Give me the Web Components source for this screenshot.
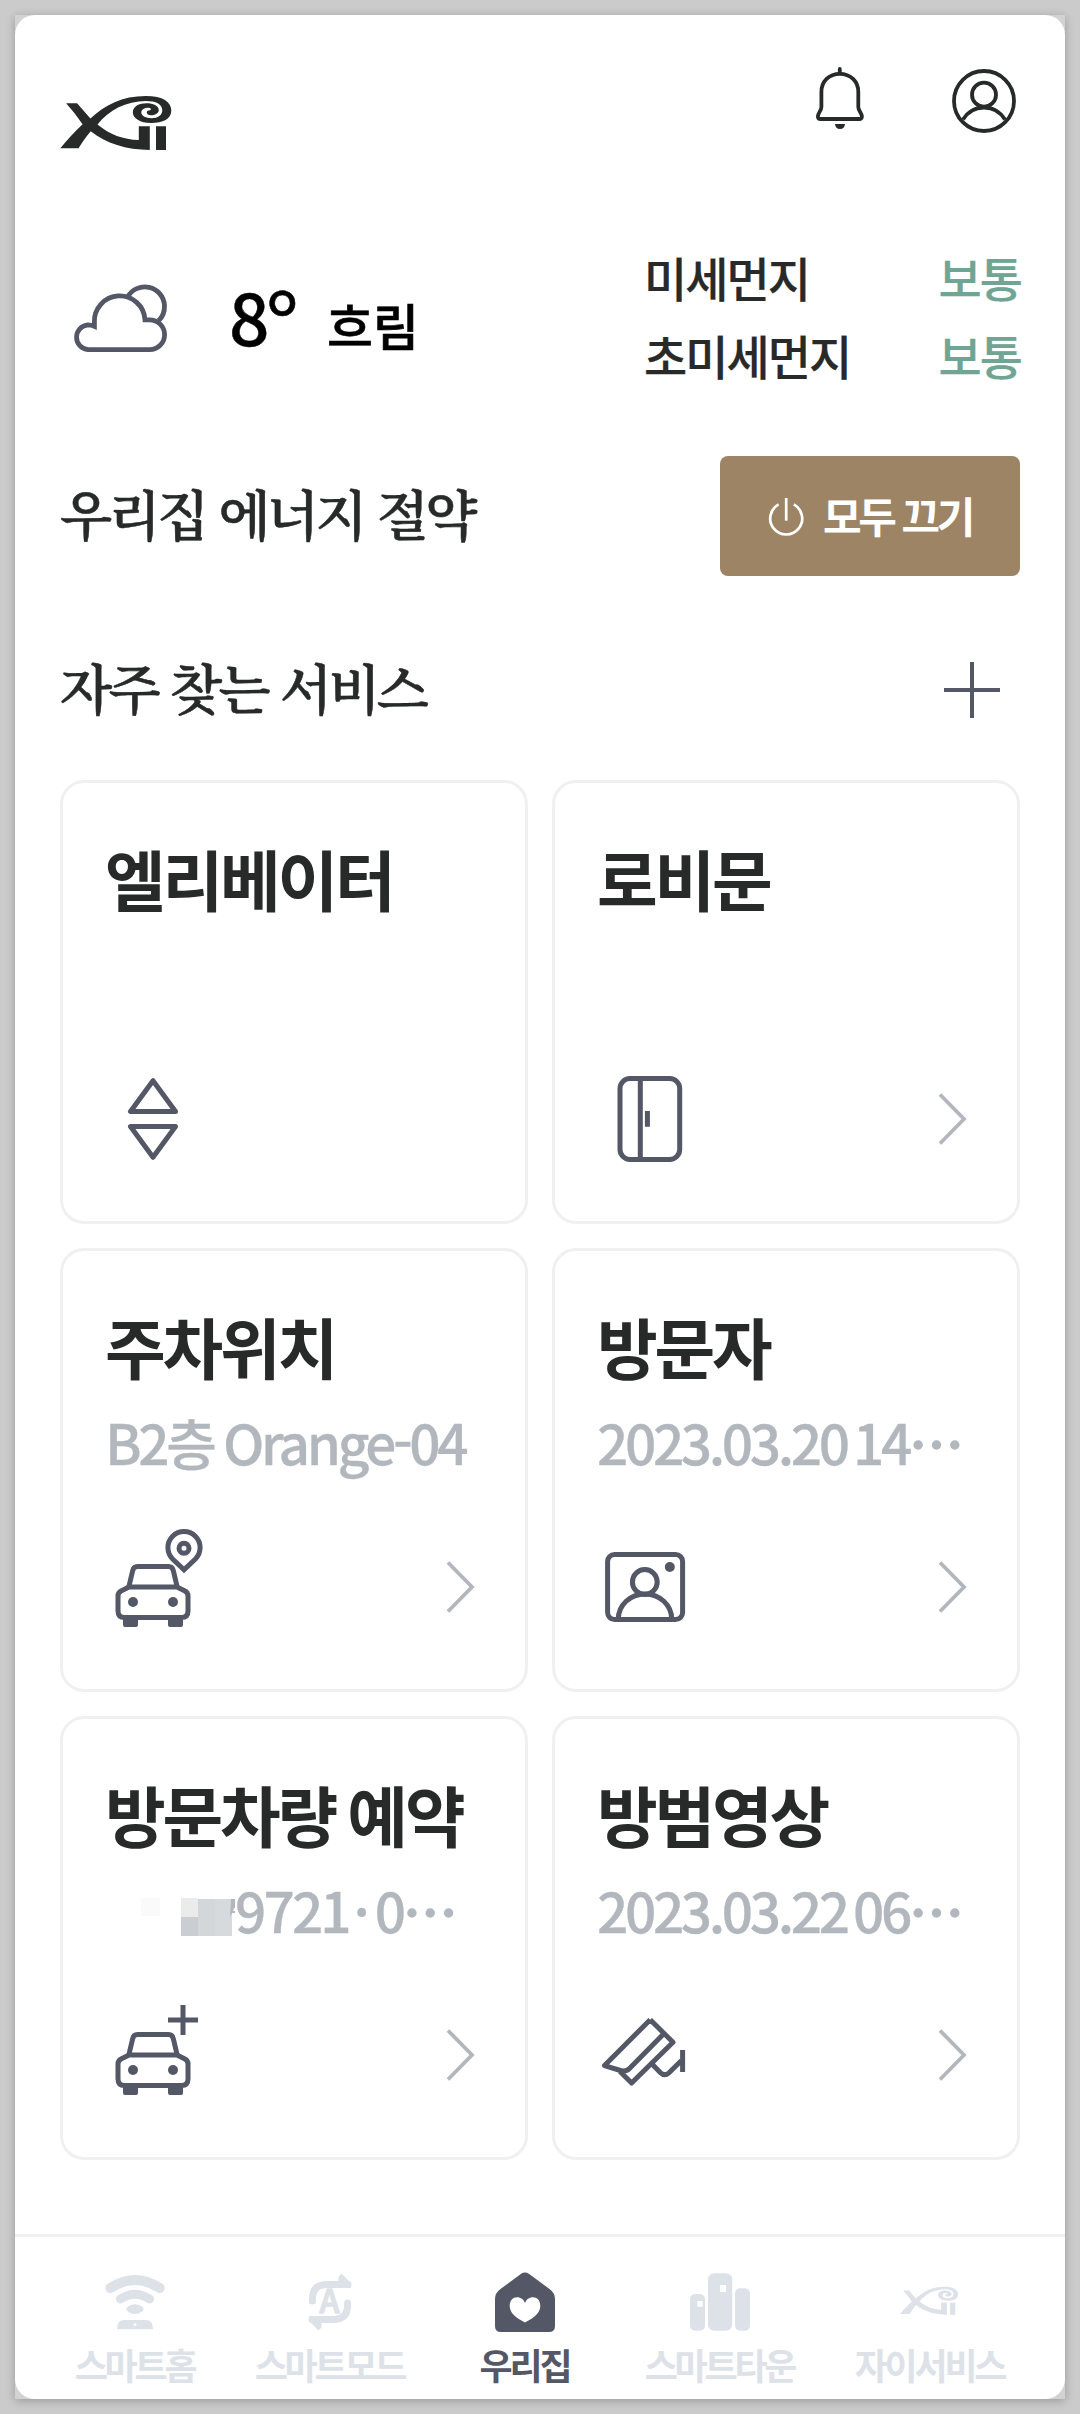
<!DOCTYPE html>
<html lang="ko">
<head>
<meta charset="utf-8">
<title>우리집</title>
<style>
  html, body { margin: 0; padding: 0; }
  body {
    background: #cbcbcb; padding: 15px; width: 1050px; height: 2384px;
    font-family: "Noto Sans CJK KR", sans-serif; color: #282a2a;
  }
</style>
</head>
<body>
<app-shell>
  <app-header></app-header>
  <weather-bar temp="8" state="흐림">
    <dust-row label="미세먼지" level="보통"></dust-row>
    <dust-row label="초미세먼지" level="보통"></dust-row>
  </weather-bar>
  <section-row heading="우리집 에너지 절약"><power-button>모두 끄기</power-button></section-row>
  <section-row class="services" heading="자주 찾는 서비스"><ui-icon name="plus" w="60" h="60" style="margin-right:18px"></ui-icon></section-row>
  <card-grid>
    <service-card heading="엘리베이터" icon="elevator"></service-card>
    <service-card heading="로비문" icon="door" link></service-card>
    <service-card heading="주차위치" icon="carpin" link>B2층 Orange-04</service-card>
    <service-card heading="방문자" icon="portrait" link>2023.03.20 14<dot-run></dot-run></service-card>
    <service-card heading="방문차량 예약" icon="carplus" link><plate-mask></plate-mask><span style="letter-spacing:-2.9px">9721</span><span style="display:inline-block;width:26px;text-align:center;letter-spacing:0">·</span>0<dot-run></dot-run></service-card>
    <service-card heading="방범영상" icon="cctv" link>2023.03.22 06<dot-run></dot-run></service-card>
  </card-grid>
  <nav-bar slot="nav">
    <nav-item icon="wifi">스마트홈</nav-item>
    <nav-item icon="mode">스마트모드</nav-item>
    <nav-item icon="house" active>우리집</nav-item>
    <nav-item icon="town">스마트타운</nav-item>
    <nav-item icon="xi">자이서비스</nav-item>
  </nav-bar>
</app-shell>
<script>
const CAR = `<g fill="none" stroke="currentColor" stroke-width="5"><path d="M29.8 54 L33.6 38 Q34.6 33.6 38.5 33.6 H69.5 Q73.4 33.6 74.4 38 L78.2 54"/><path d="M30 54 H78 L85.5 57.8 Q89 59.5 89 63 V78 Q89 84.5 82.5 84.5 H25.5 Q19 84.5 19 78 V63 Q19 59.5 22.5 57.8 Z"/></g>
<g fill="currentColor"><circle cx="34" cy="69" r="5"/><circle cx="74" cy="69" r="5"/><path d="M24 85h15v7q0 2-2 2h-11q-2 0-2-2zM69 85h15v7q0 2-2 2h-11q-2 0-2-2z"/></g>`;
const XI = `<g fill="currentColor"><path d="M6.1 7.3H17.1L30.4 22.6C45 9 62 0 86 0V5C66 5.2 49 14 37.5 28.4C50 38.500 63 43.500 78.800 44V30.300H89.800V54C66 53.500 46 47.500 30.700 35.200C26 41 22 46.500 18.600 52.300H0.300C7 44 14 36.500 22.600 28.300Q15 17 6.100 7.300Z"/><path d="M85.800 0C103 0 111.300 6 111.300 14.500C111.300 23 103 27 91 27C80 27 72.800 22 72.800 16.500C72.800 10.500 79 7.300 86.500 7.300C93 7.300 98.800 10 98.800 14C98.800 17.500 94.500 19.300 91 19.300C88.500 19.300 86.800 18 86.800 16.500C86.800 15 88 14.500 90 14.300C91.500 13.800 91 11.800 88.500 11.800C84.500 11.800 81.300 13.500 81.300 16.500C81.300 20 86 22.200 91.500 22.200C98 22.200 102.300 19 102.300 14.500C102.300 8 96 5 85.800 5Z"/><path d="M96 30.300h10V54H96z"/></g>`;
const ICONS = {
  logo: XI,
  bell: `<g fill="none" stroke="currentColor" stroke-width="3.8"><path d="M29.8 5V9" stroke-linecap="round"/><path d="M29.800 9.800C19 9.800 11.400 17.500 11.400 28V43C11.400 46.500 8.200 48.500 7.900 52.300Q7.800 55 10.500 55H49.300Q52 55 51.900 52.300C51.500 48.500 48.300 46.500 48.300 43V28C48.300 17.500 40.600 9.800 29.800 9.800Z"/></g><path d="M25 60H35Q34.500 65 30 65T25 60Z" fill="currentColor"/>`,
  user: `<g fill="none" stroke="currentColor" stroke-width="3.8"><circle cx="34" cy="34" r="30"/><circle cx="34" cy="27.700" r="12"/><path d="M13 52.500A24.400 24.400 0 0 1 55 52.500"/></g>`,
  cloud: `<g fill="none" stroke="currentColor" stroke-width="4.800"><path d="M18 69.600A12.600 12.400 0 0 1 18 44.900Q21.500 44.900 24.400 46.300V42.500A25.300 25.200 0 0 1 75 39.800H79.600A15 14.900 0 0 1 79.600 69.600Z"/><path d="M57.500 17.200A19.700 19.700 0 0 1 94.500 25.500Q94.800 35 88.500 40.800"/></g>`,
  plus: `<path d="M30 2V58M2 30H58" stroke="currentColor" stroke-width="4"/>`,
  power: `<g fill="none" stroke="currentColor" stroke-width="2.700"><path d="M13.600 9.400A16 16 0 1 0 28.800 9.400"/><path d="M21.200 3V25.700"/></g>`,
  elevator: `<g fill="none" stroke="currentColor" stroke-width="5" stroke-linejoin="round"><path d="M54 15.700L31.500 46.500H76.500Z"/><path d="M54 92.300L31.500 61.500H76.500Z"/></g>`,
  door: `<g fill="none" stroke="currentColor" stroke-width="5"><rect x="29" y="13.500" width="59.700" height="81" rx="10"/><path d="M49.300 13V95M56.400 46V61.700"/></g>`,
  carpin: CAR + `<g fill="none" stroke="currentColor" stroke-width="5"><path d="M85 36.700L73.600 26A16.100 16.100 0 1 1 96.400 26Z"/><circle cx="85" cy="15.300" r="5"/></g>`,
  carplus: CAR + `<path d="M84 4V34M69 19H99" stroke="currentColor" stroke-width="5"/>`,
  portrait: `<g fill="none" stroke="currentColor" stroke-width="5"><rect x="16.600" y="21.500" width="75" height="65" rx="7"/><circle cx="53.800" cy="49" r="12.400"/><path d="M27.300 86A26.600 25 0 0 1 80.700 86"/></g><circle cx="78.800" cy="34" r="5" fill="currentColor"/>`,
  cctv: `<g fill="none" stroke="currentColor" stroke-width="5" stroke-linejoin="round"><path d="M59.200 18.700L13.500 64.600L29.500 69.500Q35 71 38.500 67.500L72.500 33M59.200 18.700L82 41.300L40.600 82L29 70.500M61.500 63.500L69.500 71.800Q73.500 75.600 78 71.800L90.500 59.500"/><path d="M91.600 49V71"/></g>`,
  chevron: `<path d="M3 3.500L27 28L3 52.500" fill="none" stroke="currentColor" stroke-width="3.800"/>`,
  wifi: `<g fill="none" stroke="currentColor"><path d="M5.300 18Q30 2 54.700 18" stroke-width="10" stroke-linecap="round"/><path d="M15.500 29Q30 19.400 44.500 29" stroke-width="9" stroke-linecap="round"/></g><path fill="currentColor" d="M23 36.500Q30 32 37 36.500Q40.500 39 37 41.500Q34 44 30 44T23 41.500Q19.500 39 23 36.500Z"/><path fill="currentColor" d="M12 59.300Q12 50 19 50H41Q48 50 48 59.300Z"/><circle cx="30" cy="54.500" r="1.500" fill="#fff"/>`,
  mode: `<g id="h"><path d="M12.400 31V29Q12.400 14.500 27 14.500H48" fill="none" stroke="currentColor" stroke-width="7" stroke-linecap="round"/><path d="M39.500 7L41.500 5L50 13.500V17H39.500Z" fill="currentColor" stroke="currentColor" stroke-width="2" stroke-linejoin="round"/></g><use href="#h" transform="rotate(180 30 32)"/><text x="29.400" y="43" text-anchor="middle" font-family="Noto Sans CJK KR" font-weight="500" font-size="32" fill="currentColor" stroke="currentColor" stroke-width="1.300" stroke-linejoin="round" letter-spacing="0">A</text>`,
  house: `<path fill="currentColor" d="M25.800 4Q30 1.200 34.200 4L54.500 19Q60 23 60 29V56Q60 62 54 62H6Q0 62 0 56V29Q0 23 5.500 19Z"/><path fill="#fff" d="M30 52.400C20 47.500 14.700 42.500 14.700 36C14.700 30.500 18 27.300 22 27.300C26 27.300 28.500 29.500 30 33C31.500 29.500 34 27.300 38 27.300C42 27.300 45.300 30.500 45.300 36C45.300 42.500 40 47.500 30 52.400Z"/>`,
  town: `<g fill="currentColor"><rect x="0" y="24" width="15" height="36.700" rx="5"/><rect x="18" y="3.300" width="24.200" height="57.400" rx="6"/><rect x="45" y="18.300" width="15" height="42.400" rx="5"/></g><path fill="#fff" d="M7.400 31h5.200v5.700h-5.200zM30.100 15h5.900v7h-5.900z"/>`,
  xi: `<g transform="translate(0 16.700) scale(.522)">${XI}</g>`
};

/* Registers an element whose shadow root is filled from a render function. */
function define(tag, css, html) {
  customElements.define(tag, class extends HTMLElement {
    constructor() { super(); this.attachShadow({ mode: "open" }); }
    connectedCallback() { this.shadowRoot.innerHTML = `<style>${css}</style>${html(this)}`; }
  });
}
const at = (el, n) => el.getAttribute(n) || "";

define("ui-icon", `:host{display:block;flex:none;color:#535766} svg{display:block;overflow:visible}`,
  el => `<svg width="${at(el,"w")}" height="${at(el,"h")}" viewBox="0 0 ${at(el,"w")} ${at(el,"h")}">${ICONS[at(el,"name")]}</svg>`);

define("app-shell", `:host{display:block;height:2384px;background:#d2d2d2;box-shadow:0 2px 9px rgba(0,0,0,.24)}
  .page{height:100%;background:#fff;border-radius:20px;display:flex;flex-direction:column;justify-content:space-between;overflow:hidden}`,
  () => `<div class="page"><main><slot></slot></main><slot name="nav"></slot></div>`);

define("app-header", `:host{display:flex;justify-content:space-between;align-items:flex-start;box-sizing:border-box;height:223px;padding:49px 47px 0 45px}
  ui-icon{color:#282a2a} .logo{margin-top:32px} .actions{display:flex;gap:80px} .user{margin-top:3px}`,
  () => `<ui-icon class="logo" name="logo" w="112" h="54"></ui-icon><div class="actions"><ui-icon name="bell" w="60" h="70"></ui-icon><ui-icon class="user" name="user" w="68" h="68"></ui-icon></div>`);

define("weather-bar", `:host{display:flex;justify-content:space-between;height:156px;padding:0 45px 0 54.500px}
  .now{display:flex;color:#000;align-items:flex-start} ui-icon{margin-top:41.500px}
  .line{display:flex;align-items:baseline;margin:25px 0 0 59.500px;line-height:104px;font-weight:500}
  .t{font-size:71px;width:98px;white-space:nowrap;-webkit-text-stroke:.4px} .deg{font-size:91px;font-weight:400;line-height:0;vertical-align:-14px;margin-left:-4px;-webkit-text-stroke:.5px}
  .s{font-size:50px;-webkit-text-stroke:.6px} .dust{width:376px}`,
  el => `<div class="now"><ui-icon name="cloud" w="100" h="75"></ui-icon><div class="line"><span class="t">${at(el,"temp")}<span class="deg">°</span></span><span class="s">${at(el,"state")}</span></div></div><div class="dust"><slot></slot></div>`);

define("dust-row", `:host{display:flex;justify-content:space-between;font-size:47px;font-weight:500;line-height:78px;letter-spacing:-2px;-webkit-text-stroke:.2px} b{font-weight:500;color:#70a594;margin-right:-1px}`,
  el => `<span>${at(el,"label")}</span><b>${at(el,"level")}</b>`);

define("section-row", `:host{display:flex;justify-content:space-between;align-items:center;height:120px;margin-top:62px;padding:0 45px}
  :host(.services){margin:54px 0 30px}
  h2{margin:0 0 6px;font:600 54px/78px "Noto Serif CJK KR","Noto Serif KR","Noto Sans CJK KR",serif;letter-spacing:-3.700px;word-spacing:0;-webkit-text-stroke:.5px}`,
  el => `<h2>${at(el,"heading")}</h2><slot></slot>`);

define("power-button", `:host{display:flex;align-items:center;box-sizing:border-box;width:300px;height:120px;border-radius:8px;background:#9d8465;color:#fff;padding-left:45px;font-size:42px;font-weight:700;letter-spacing:-3.500px}
  ui-icon{color:#fff;margin-right:16px} span{line-height:60px;margin-bottom:3px}`,
  () => `<ui-icon name="power" w="42" h="42"></ui-icon><span><slot></slot></span>`);

define("card-grid", `:host{display:grid;grid-template-columns:468px 468px;grid-auto-rows:444px;gap:24px;padding:0 45px}`, () => `<slot></slot>`);

define("service-card", `:host{display:flex;flex-direction:column;box-sizing:border-box;border:3px solid #f0f0f0;border-radius:24px;padding:46px 50px 48px 36px}
  h3{margin:0 0 11px 6px;font-size:66px;line-height:96px;font-weight:700;letter-spacing:-3.200px;word-spacing:-3px;white-space:nowrap}
  p{margin:0 0 0 6px;height:74px;line-height:74px;font-size:55px;font-weight:500;letter-spacing:-3.400px;word-spacing:-2.500px;color:#b2b7be;white-space:nowrap;-webkit-text-stroke:.3px}
  .foot{margin-top:auto;display:flex;justify-content:space-between;align-items:center} .go{color:#b2b7be}`,
  el => `<h3>${at(el,"heading")}</h3><p><slot></slot></p><div class="foot"><ui-icon name="${at(el,"icon")}" w="108" h="108"></ui-icon>${el.hasAttribute("link") ? '<ui-icon class="go" name="chevron" w="30" h="56"></ui-icon>' : ""}</div>`);

define("dot-run", `:host{display:inline;-webkit-text-stroke:1.500px}`, () => `⋯`);

define("plate-mask", `:host{display:inline-block;width:130px;height:40px;vertical-align:-4px} svg{display:block}`,
  () => `<svg width="130" height="40"><path fill="#fbfafa" d="M36 1h19v18H36z"/><path fill="#e9eceb" d="M76 1h17v19H76z"/><path fill="#cacdd1" d="M76 20h17v19H76z"/><path fill="#d4d7da" d="M93 2h17v37H93z"/><path fill="#d7dadd" d="M110 2h17v37h-17z"/><path fill="#b2b7be" d="M126 2h5l-1 6h2v3h-3l-1 3h3v2h-4l-2 4z"/></svg>`);

define("nav-bar", `:host{display:grid;grid-template-columns:repeat(4,195px) 225px;box-sizing:border-box;height:165px;border-top:3px solid #f0f0f0;padding:33px 0 0 22px}`, () => `<slot></slot>`);

define("nav-item", `:host{display:flex;flex-direction:column;align-items:center;font-size:36px;font-weight:700;letter-spacing:-3.200px;color:#dde2e9}
  :host([active]){color:#535766} ui-icon{color:inherit} span{line-height:60px;margin-top:4px}`,
  el => `<ui-icon name="${at(el,"icon")}" w="60" h="60"></ui-icon><span><slot></slot></span>`);
</script>
</body>
</html>
